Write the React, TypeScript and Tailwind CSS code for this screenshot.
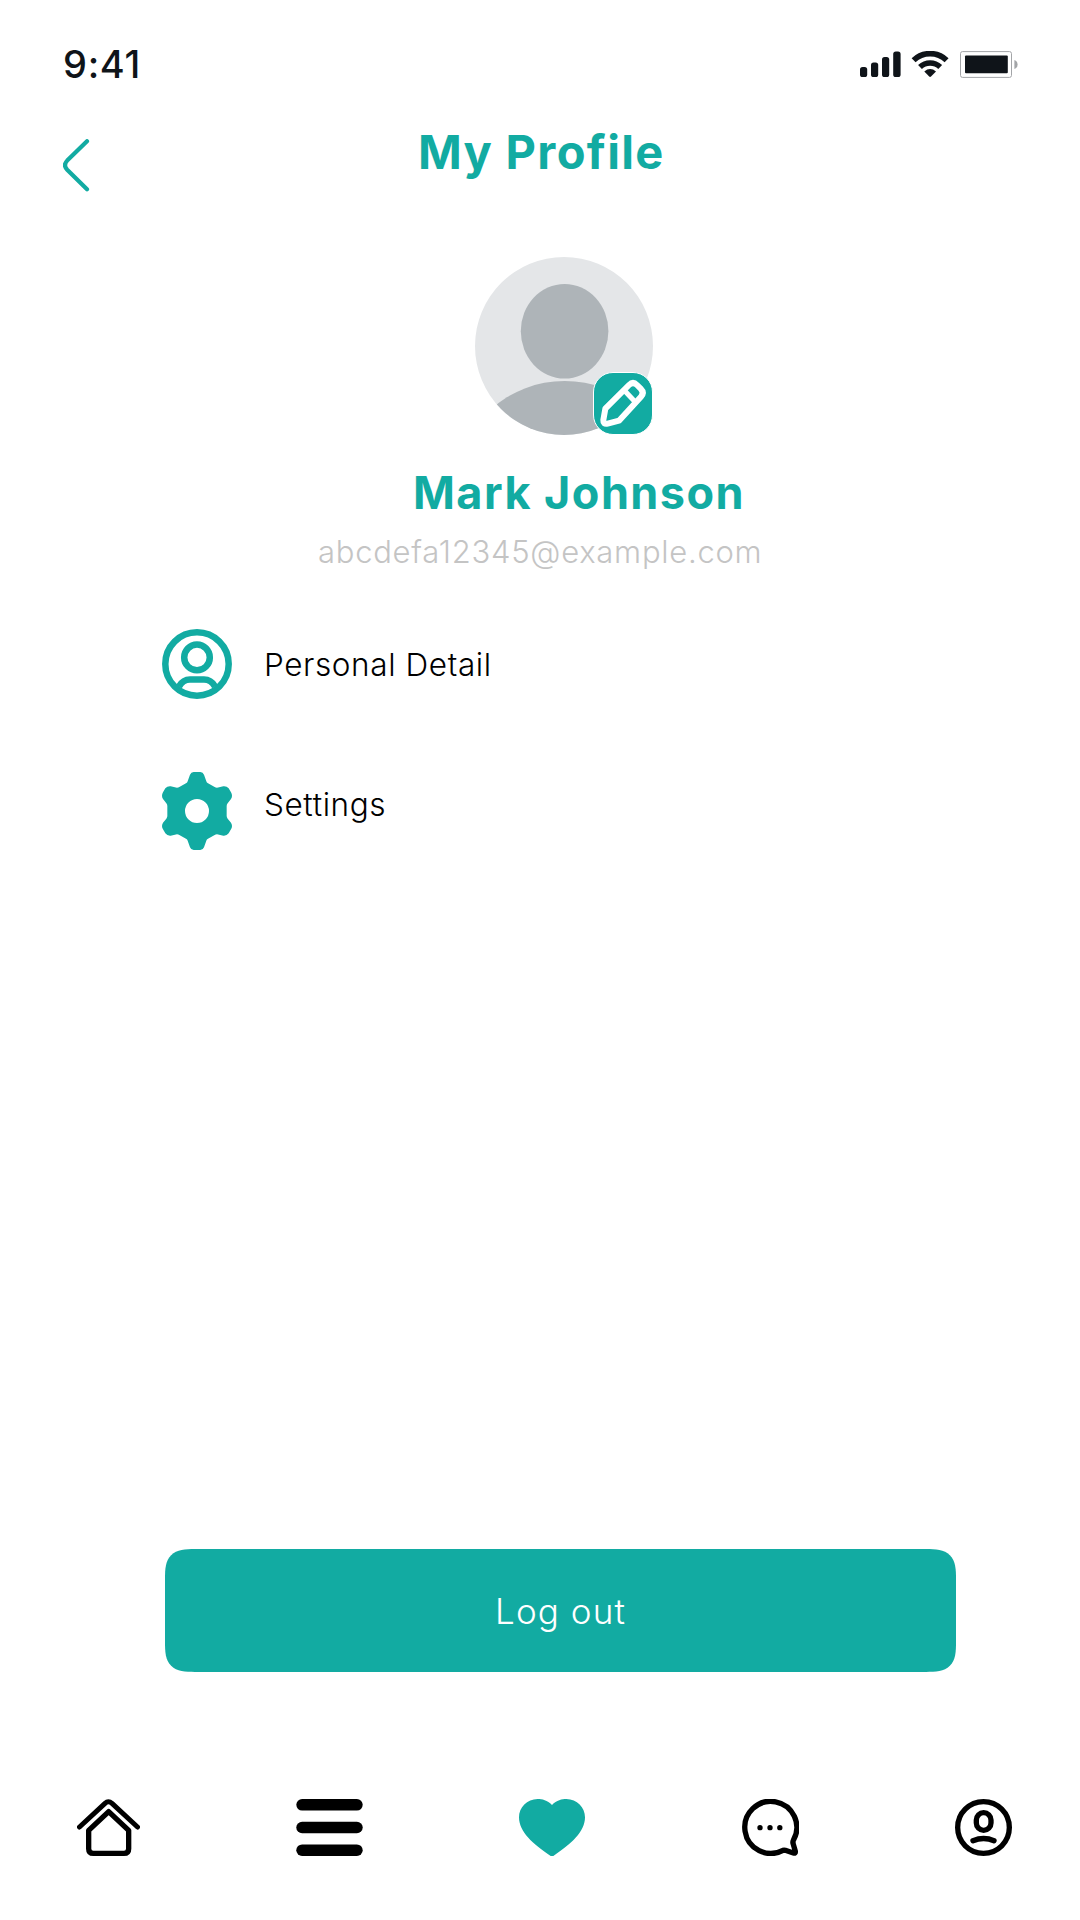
import type { ReactNode } from "react";

const TEAL = "#12aba2";

function StatusIcons() {
  return (
    <svg width="160" height="28" viewBox="0 0 160 28" fill="#0f1419">
      <rect x="0" y="16" width="7.2" height="10" rx="2.6" />
      <rect x="11" y="11.5" width="7.2" height="14.5" rx="2.6" />
      <rect x="22" y="6" width="7.2" height="20" rx="2.6" />
      <rect x="33.2" y="0.5" width="7.4" height="25.5" rx="2.6" />
      <g fill="none" stroke="#0f1419">
        <path d="M53.6 9.2 A24 24 0 0 1 86.6 9.2" strokeWidth="5.7" />
        <path d="M60 16 A14.8 14.8 0 0 1 80.2 16" strokeWidth="5.6" />
      </g>
      <path d="M64.3 20.4 Q70.1 15.8 76 20.4 L71 25.6 Q70.1 26.4 69.2 25.6 Z" />
      <rect x="100.5" y="0.6" width="51" height="25.8" rx="2" fill="none" stroke="#a3a5a8" />
      <rect x="105" y="4.6" width="42.8" height="17.6" rx="1" />
      <path d="M154.400 9 Q157.600 10.2 157.600 13.5 Q157.600 16.8 154.400 18 Z" fill="#a3a5a8" />
    </svg>
  );
}

function BackIcon() {
  return (
    <svg width="27" height="53" viewBox="0 0 27 53" fill="none" stroke={TEAL} strokeWidth="4.2" strokeLinecap="round">
      <path d="M24 2.2 L4.200 21.6 Q-0.200 26.2 4.200 30.8 L24 50.2" />
    </svg>
  );
}

function Avatar() {
  return (
    <svg width="178" height="178" viewBox="0 0 178 178">
      <clipPath id="face">
        <circle cx="89" cy="89" r="89" />
      </clipPath>
      <g clipPath="url(#face)">
        <rect width="178" height="178" fill="#e4e6e8" />
        <ellipse cx="89.6" cy="74.2" rx="43.800" ry="47.3" fill="#aeb4b8" />
        <ellipse cx="89.6" cy="221" rx="104" ry="97" fill="#aeb4b8" />
      </g>
    </svg>
  );
}

function PencilIcon() {
  return (
    <svg
      className="shrink-0"
      width="60"
      height="62"
      viewBox="40 38 180 186"
      fill="none"
      stroke="white"
      strokeWidth="18"
      strokeLinejoin="round"
    >
      <path d="M77 145 L148 74 Q160 62 172 74 L183 85 Q195 97 184 109 L118 181 L84 190 Q70 193 71 179 Z" />
      <path d="M135 91 L166 124" strokeWidth="15" />
    </svg>
  );
}

function PersonIcon() {
  return (
    <svg width="70" height="70" viewBox="0 0 70 70" fill="none" stroke={TEAL} strokeWidth="6.5">
      <circle cx="35" cy="35" r="31.7" />
      <circle cx="35" cy="28.4" r="12.8" />
      <path d="M17 57.500 Q21 50.600 28 50.600 H42 Q49 50.600 53 57.500" />
    </svg>
  );
}

function GearIcon() {
  return (
    <svg width="70" height="78" viewBox="36 486 210 234" fill={TEAL}>
      <path
        fillRule="evenodd"
        d="M131 486 H151 Q159 486 162 494 L169 514 Q170 518 174 520 L194 531 Q197 533 201 533 L220 529 Q230 528 236 535 L243 547 Q249 558 243 567 L233 580 Q230 583 230 588 V618 Q230 622 233 626 L243 638 Q249 648 243 658 L236 670 Q230 678 220 677 L201 673 Q197 673 194 675 L174 686 Q170 688 169 692 L162 712 Q159 720 151 720 H131 Q123 720 120 712 L113 692 Q112 688 108 686 L88 675 Q85 673 81 673 L62 677 Q52 678 46 670 L39 658 Q33 648 39 638 L49 626 Q52 622 52 618 V588 Q52 583 49 580 L39 567 Q33 558 39 547 L46 535 Q52 528 62 529 L81 533 Q85 533 88 531 L108 520 Q112 518 113 514 L120 494 Q123 486 131 486 Z M141 567 A36 36 0 1 0 141 639 A36 36 0 1 0 141 567 Z"
      />
    </svg>
  );
}

function HomeIcon() {
  return (
    <svg width="63" height="57" viewBox="51 57 189 171" fill="none" stroke="black" strokeLinecap="round" strokeLinejoin="round">
      <path d="M58.500 141 L135 70 Q145 60.500 156 70 L232.500 141" strokeWidth="15" />
      <path d="M86 151 L146 95 L206 151 V206 Q206 220 192 220 H100 Q86 220 86 206 Z" strokeWidth="16" />
    </svg>
  );
}

function ListIcon() {
  return (
    <svg width="67" height="57" viewBox="0 0 67 57">
      <rect x="0.300" y="0" width="66.400" height="11.6" rx="5.800" />
      <rect x="0.300" y="22.7" width="66.400" height="11.6" rx="5.800" />
      <rect x="0.300" y="45.4" width="66.400" height="11.6" rx="5.800" />
    </svg>
  );
}

function HeartIcon() {
  return (
    <svg width="66" height="57" viewBox="57 57 198 171" fill={TEAL}>
      <path d="M156 75 C170 60 186 57 199 57 C231 57 255 82 255 112 C255 155 213 193 161 227 Q156 230 151 227 C99 193 57 155 57 112 C57 82 81 57 113 57 C126 57 142 60 156 75 Z" />
    </svg>
  );
}

function ChatIcon() {
  return (
    <svg width="58" height="57" viewBox="723 57 174 171">
      <path
        d="M849 211 A78 78 0 1 1 880 181 Q878 185 879 190 L886 214 Q887 221 880 219 L856 211 Q852 210 849 211 Z"
        fill="none"
        stroke="black"
        strokeWidth="16"
        strokeLinejoin="round"
      />
      <circle cx="780" cy="143" r="8" />
      <circle cx="810" cy="143" r="8" />
      <circle cx="839.5" cy="143" r="8" />
    </svg>
  );
}

function AccountIcon() {
  return (
    <svg width="57" height="57" viewBox="74 57 171 171" fill="none" stroke="black" strokeWidth="16" strokeLinecap="round">
      <circle cx="159.5" cy="142.5" r="77.5" />
      <rect x="138" y="98" width="44" height="53" rx="22" />
      <path d="M128 182 Q160 169 191 182" />
    </svg>
  );
}

function MenuRow({ icon, children }: { icon: ReactNode; children: ReactNode }) {
  return (
    <button className="flex items-start gap-[32px] text-left text-[31.5px] leading-[40px] font-light tracking-[0.6px] text-black">
      {icon}
      {children}
    </button>
  );
}

export default function App() {
  return (
    <main className="flex h-[1920px] w-[1080px] flex-col overflow-hidden bg-white font-['Inter',sans-serif]">
      <div className="flex h-[130px] items-start justify-between pt-[40px] pr-[60px] pl-[63px]">
        <span className="text-[38px] leading-[48px] font-medium tracking-[0.7px] text-[#0f1419]">9:41</span>
        <div className="pt-[11px]">
          <StatusIcons />
        </div>
      </div>

      <header className="flex h-[127px] items-start pl-[63px]">
        <button aria-label="Back" className="w-[355px] pt-[9px]">
          <BackIcon />
        </button>
        <h1 className="text-[47px] leading-[44px] font-bold tracking-[1.3px] whitespace-nowrap text-[#12aba2]">
          My Profile
        </h1>
      </header>

      <section className="flex flex-col">
        <div className="relative ml-[475px] h-[178px] w-[178px]">
          <Avatar />
          <button
            aria-label="Edit photo"
            className="absolute top-[115px] left-[118px] flex h-[63px] w-[60px] items-center justify-center overflow-hidden rounded-[20px] border border-white bg-[#12aba2]"
          >
            <PencilIcon />
          </button>
        </div>
        <h2 className="mt-[34px] ml-[413px] text-[45px] leading-[48px] font-bold tracking-[1.45px] whitespace-nowrap text-[#12aba2]">
          Mark Johnson
        </h2>
        <p className="mt-[15px] ml-[318px] text-[31px] leading-[40px] font-light tracking-[0.73px] whitespace-nowrap text-[#c4c4c4]">
          abcdefa12345@example.com
        </p>
      </section>

      <nav className="mt-[57px] ml-[162px] flex flex-col items-start gap-[73px]">
        <MenuRow icon={<PersonIcon />}>
          <span className="pt-[16px]">Personal Detail</span>
        </MenuRow>
        <MenuRow icon={<GearIcon />}>
          <span className="pt-[13px]">Settings</span>
        </MenuRow>
      </nav>

      <button className="mt-auto ml-[165px] flex h-[123px] w-[791px] items-center justify-center rounded-[22px] bg-[#12aba2] text-[35px] font-light tracking-[1.1px] text-white supports-[corner-shape:squircle]:rounded-[30px] supports-[corner-shape:squircle]:[corner-shape:superellipse(1.6)]">
        <span className="pt-[2px]">Log out</span>
      </button>

      <footer className="mt-[127px] mb-[64px] flex h-[57px] items-start justify-between pr-[68px] pl-[77px]">
        <HomeIcon />
        <ListIcon />
        <HeartIcon />
        <ChatIcon />
        <AccountIcon />
      </footer>
    </main>
  );
}
